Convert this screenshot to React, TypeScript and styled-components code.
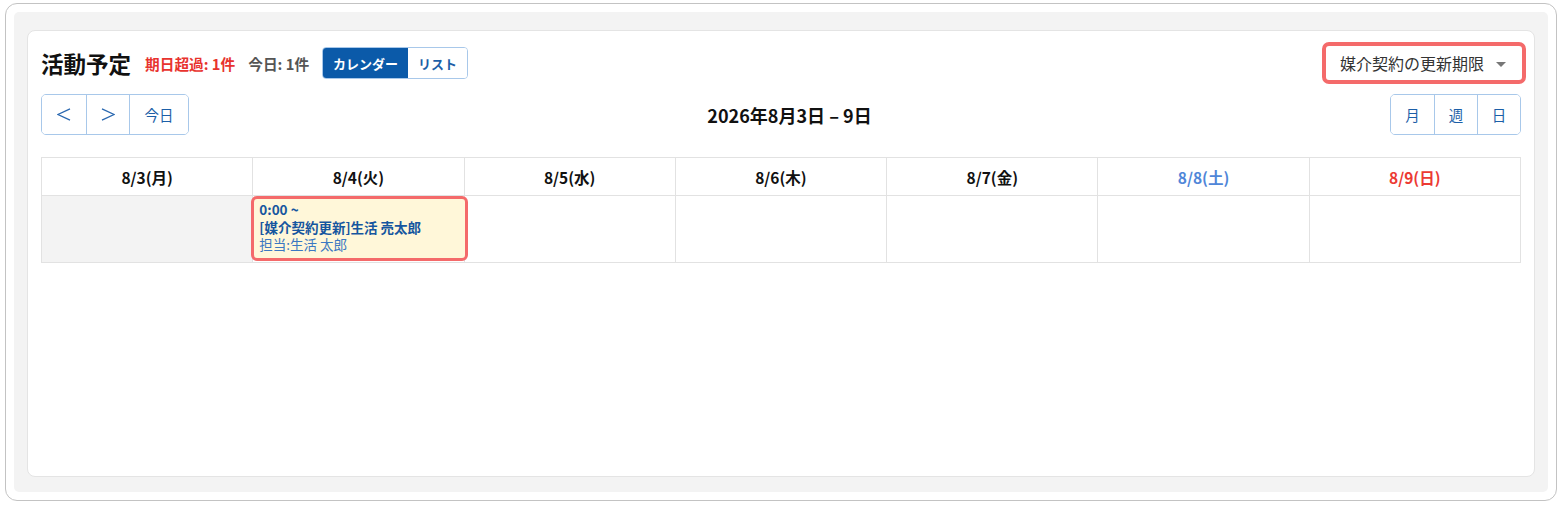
import React from "react";
import styled, { createGlobalStyle } from "styled-components";

const GlobalStyle = createGlobalStyle`
  html, body {
    margin: 0;
    padding: 0;
    background: #ffffff;
  }
  body {
    font-family: "Noto Sans CJK JP", "Noto Sans", sans-serif;
    color: #222;
  }
  * { box-sizing: border-box; }
`;

const Page = styled.div`
  width: 1562px;
  height: 508px;
  padding: 3px 5px 7px 5px;
`;

const Frame = styled.div`
  height: 100%;
  border: 1px solid #c3c3c3;
  border-radius: 12px;
  background: #fff;
  padding: 8px;
  display: flex;
`;

const Shell = styled.div`
  flex: 1;
  background: #f3f3f3;
  border-radius: 5px;
  padding: 18px 13px 15px 13px;
  display: flex;
`;

const Card = styled.section`
  flex: 1;
  background: #fff;
  border: 1px solid #e4e4e4;
  border-radius: 8px;
  padding: 11px 13px;
  display: flex;
  flex-direction: column;
`;

const HeaderRow = styled.div`
  display: flex;
  align-items: center;
  justify-content: space-between;
  height: 42px;
`;

const TitleGroup = styled.div`
  display: flex;
  align-items: center;
  gap: 13px;
`;

const Title = styled.h1`
  margin: 0 1px 0 0;
  font-size: 22.5px;
  font-weight: 700;
  color: #111;
`;

const Count = styled.span<{ $alert?: boolean }>`
  font-size: 14.7px;
  font-weight: 700;
  color: ${(p) => (p.$alert ? "#e8332e" : "#555")};
`;

const Segmented = styled.div`
  display: flex;
  height: 32px;
  border: 1px solid #a8c8ea;
  border-radius: 4px;
  overflow: hidden;
`;

const SegButton = styled.button<{ $active?: boolean }>`
  border: none;
  margin: 0;
  padding: 0 10px;
  font-family: inherit;
  font-size: 13px;
  font-weight: 700;
  background: ${(p) => (p.$active ? "#0b5aa9" : "#fff")};
  color: ${(p) => (p.$active ? "#fff" : "#1c5fa8")};
`;

const Dropdown = styled.button`
  display: flex;
  align-items: center;
  gap: 12px;
  height: 42px;
  margin-right: -5px;
  padding: 0 16px 0 14px;
  border: 4px solid #f46a6a;
  border-radius: 7px;
  background: #fff;
  font-family: inherit;
  font-size: 16px;
  color: #333;
  white-space: nowrap;
`;

const Caret = styled.span`
  width: 0;
  height: 0;
  border-left: 5px solid transparent;
  border-right: 5px solid transparent;
  border-top: 5px solid #777;
  margin-top: 2px;
`;

const NavRow = styled.div`
  display: flex;
  align-items: center;
  justify-content: space-between;
  margin-top: 10px;
`;

const ButtonGroup = styled.div`
  display: flex;
  border: 1px solid #a8c8ea;
  border-radius: 5px;
  overflow: hidden;
  height: 41px;
`;

const NavButton = styled.button<{ $w: number }>`
  width: ${(p) => p.$w}px;
  border: none;
  border-left: 1px solid #a8c8ea;
  background: #fff;
  margin: 0;
  padding: 0;
  font-family: inherit;
  font-size: 14.5px;
  color: #1c5fa8;
  display: flex;
  align-items: center;
  justify-content: center;
  &:first-child { border-left: none; }
`;

const RangeTitle = styled.h2`
  margin: 0;
  font-size: 18px;
  font-weight: 700;
  color: #111;
`;

const WeekTable = styled.table`
  margin-top: 22px;
  width: 100%;
  border-collapse: collapse;
  table-layout: fixed;
`;

const HeadCell = styled.th<{ $tone?: "sat" | "sun" }>`
  height: 38px;
  border: 1px solid #e2e2e2;
  font-size: 15.5px;
  font-weight: 700;
  color: ${(p) =>
    p.$tone === "sat" ? "#4f86d8" : p.$tone === "sun" ? "#ec3a33" : "#111"};
`;

const DayCell = styled.td<{ $past?: boolean }>`
  height: 67px;
  border: 1px solid #e2e2e2;
  background: ${(p) => (p.$past ? "#f3f3f3" : "#fff")};
  vertical-align: top;
  padding: 0;
`;

/* Event chip sits above the neighbouring cells so its highlight ring can spill over */
const EventCard = styled.div`
  position: relative;
  z-index: 1;
  margin: 0 -4px 0 -2px;
  height: 65px;
  border: 3px solid #f46a6a;
  border-radius: 6px;
  background: #fff7d9;
  padding: 2px 5px;
  display: flex;
  flex-direction: column;
  color: #16569f;
  font-size: 13.5px;
  line-height: 17.5px;
`;

const EventTime = styled.span`
  font-weight: 700;
`;

const EventTitle = styled.span`
  font-weight: 700;
`;

const EventStaff = styled.span`
  color: #3b78c2;
`;

const Chevron = ({ dir }: { dir: "left" | "right" }) => (
  <svg width="14" height="13" viewBox="0 0 14 13" fill="none">
    <polyline
      points={dir === "left" ? "13,0.8 1,6.5 13,12.2" : "1,0.8 13,6.5 1,12.2"}
      stroke="#2a68b0"
      strokeWidth="1.3"
      strokeLinejoin="miter"
    />
  </svg>
);

type Day = { label: string; tone?: "sat" | "sun"; past?: boolean };

const days: Day[] = [
  { label: "8/3(月)", past: true },
  { label: "8/4(火)" },
  { label: "8/5(水)" },
  { label: "8/6(木)" },
  { label: "8/7(金)" },
  { label: "8/8(土)", tone: "sat" },
  { label: "8/9(日)", tone: "sun" },
];

export default function App() {
  return (
    <>
      <GlobalStyle />
      <Page>
        <Frame>
          <Shell>
            <Card>
              <HeaderRow>
                <TitleGroup>
                  <Title>活動予定</Title>
                  <Count $alert>期日超過: 1件</Count>
                  <Count>今日: 1件</Count>
                  <Segmented>
                    <SegButton $active>カレンダー</SegButton>
                    <SegButton>リスト</SegButton>
                  </Segmented>
                </TitleGroup>
                <Dropdown>
                  媒介契約の更新期限
                  <Caret />
                </Dropdown>
              </HeaderRow>

              <NavRow>
                <ButtonGroup>
                  <NavButton $w={44}>
                    <Chevron dir="left" />
                  </NavButton>
                  <NavButton $w={43}>
                    <Chevron dir="right" />
                  </NavButton>
                  <NavButton $w={59}>今日</NavButton>
                </ButtonGroup>
                <RangeTitle>2026年8月3日 – 9日</RangeTitle>
                <ButtonGroup>
                  <NavButton $w={43}>月</NavButton>
                  <NavButton $w={43}>週</NavButton>
                  <NavButton $w={43}>日</NavButton>
                </ButtonGroup>
              </NavRow>

              <WeekTable>
                <thead>
                  <tr>
                    {days.map((d) => (
                      <HeadCell key={d.label} $tone={d.tone}>
                        {d.label}
                      </HeadCell>
                    ))}
                  </tr>
                </thead>
                <tbody>
                  <tr>
                    {days.map((d, i) => (
                      <DayCell key={d.label} $past={d.past}>
                        {i === 1 && (
                          <EventCard>
                            <EventTime>0:00 ~</EventTime>
                            <EventTitle>[媒介契約更新]生活 売太郎</EventTitle>
                            <EventStaff>担当:生活 太郎</EventStaff>
                          </EventCard>
                        )}
                      </DayCell>
                    ))}
                  </tr>
                </tbody>
              </WeekTable>
            </Card>
          </Shell>
        </Frame>
      </Page>
    </>
  );
}
